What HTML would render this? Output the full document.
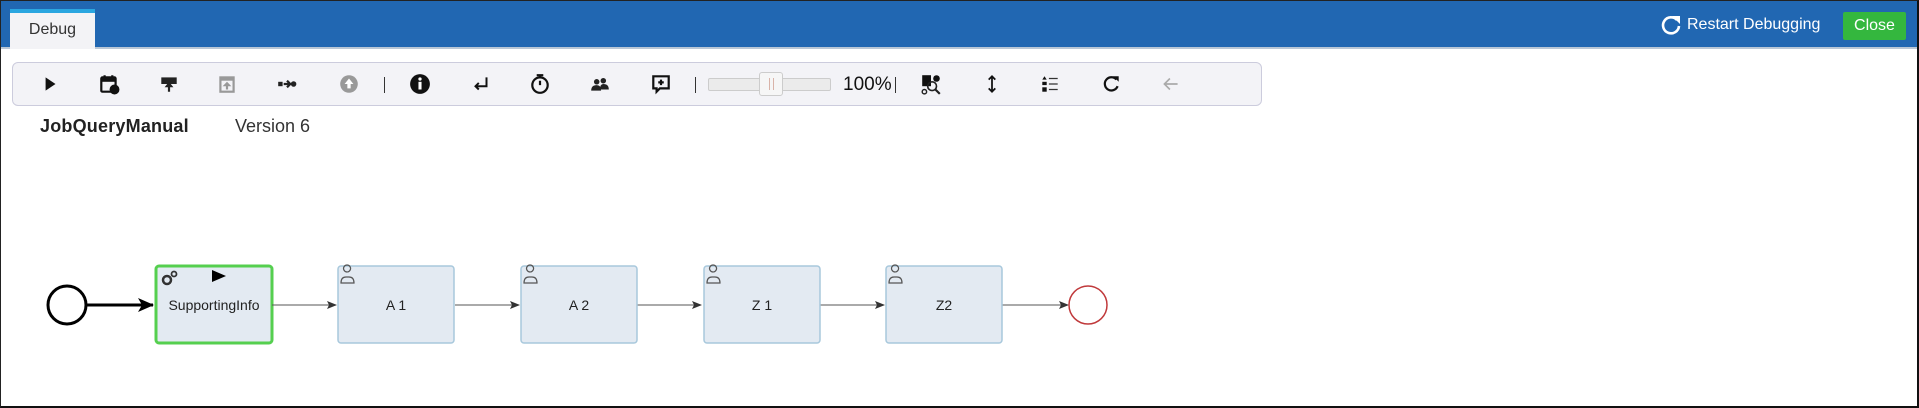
<!DOCTYPE html>
<html><head><meta charset="utf-8"><style>
*{box-sizing:border-box;margin:0;padding:0}
body{width:1919px;height:408px;overflow:hidden;background:#fff;font-family:"Liberation Sans",sans-serif;position:relative}
.frame{position:absolute;inset:0;border:1px solid #222;border-right:2px solid #111;border-bottom:2px solid #111;pointer-events:none;z-index:9}
.hdr{position:absolute;left:0;top:0;width:1919px;height:49px;background:#2167b2;border-bottom:2px solid #b9c7d6}
.tab{position:absolute;left:10px;top:9px;width:85px;height:40px;background:#f3f3f6;border-top:4px solid #2aa6e0;font-size:16px;color:#333;text-align:center;line-height:34px}
.restart{position:absolute;left:1660px;top:14px;color:#fff;font-size:16px;line-height:22px;display:flex;align-items:center;gap:5px}
.close{position:absolute;left:1843px;top:12px;width:63px;height:28px;background:#34b73e;border-radius:2px;color:#fff;font-size:16px;text-align:center;line-height:28px}
.tb{position:absolute;left:12px;top:62px;width:1250px;height:44px;background:#f3f3f7;border:1px solid #ccd;border-radius:6px}
.ic{position:absolute;top:10px;width:22px;height:22px;transform:translateX(-11px)}
.sep{position:absolute;top:14px;width:1px;height:16px;background:#333}
.title{position:absolute;left:40px;top:116px;font-size:18px;font-weight:bold;color:#222;letter-spacing:0.2px}
.ver{position:absolute;left:235px;top:116px;font-size:18px;color:#333}
</style></head><body>
<div class="hdr"></div>
<div class="tab">Debug</div>
<div class="restart"><svg width="22" height="22" viewBox="0 0 22 22"><path d="M17 6 A8 8 0 1 0 19 12" fill="none" stroke="#fff" stroke-width="2.6"/><path d="M12 2 L20 2 L20 10Z" fill="#fff"/></svg><span>Restart Debugging</span></div>
<div class="close">Close</div>
<div class="tb">
<svg class="ic" style="left:37px" viewBox="0 0 20 20"><path d="M6 4 L15 10 L6 16Z" fill="#111"/></svg>
<svg class="ic" style="left:96px" viewBox="0 0 20 20"><rect x="3" y="4" width="13" height="13" rx="1" fill="none" stroke="#111" stroke-width="2"/><rect x="3" y="4" width="13" height="4" fill="#111"/><path d="M6 2v3M13 2v3" stroke="#111" stroke-width="2"/><circle cx="15" cy="15" r="4.5" fill="#111"/></svg>
<svg class="ic" style="left:156px" viewBox="0 0 20 20"><rect x="3" y="4" width="14" height="6" fill="#222"/><path d="M10 8 L6 13 H9 V17 H11 V13 H14Z" fill="#222"/></svg>
<svg class="ic" style="left:214px" viewBox="0 0 20 20"><rect x="4" y="4" width="12" height="13" fill="none" stroke="#999" stroke-width="2"/><rect x="4" y="4" width="12" height="3" fill="#999"/><path d="M10 8 L6 12 H9 V15 H11 V12 H14Z" fill="#999"/></svg>
<svg class="ic" style="left:274px" viewBox="0 0 20 20"><rect x="2" y="8" width="4" height="4" fill="#222"/><path d="M7 10 H12 M10 7 L13 10 L10 13" stroke="#222" stroke-width="2" fill="none"/><circle cx="16" cy="10" r="2.5" fill="#222"/></svg>
<svg class="ic" style="left:336px" viewBox="0 0 20 20"><circle cx="10" cy="10" r="8" fill="#999"/><path d="M10 5 L6 10 H8.5 V14 H11.5 V10 H14Z" fill="#fff"/></svg>
<div class="sep" style="left:371px"></div>
<svg class="ic" style="left:407px" viewBox="0 0 20 20"><circle cx="10" cy="10" r="9" fill="#111"/><rect x="8.6" y="8" width="2.8" height="7" fill="#fff"/><circle cx="10" cy="5.5" r="1.5" fill="#fff"/></svg>
<svg class="ic" style="left:468px" viewBox="0 0 20 20"><path d="M15 4 V12 H5 M8 9 L5 12 L8 15" stroke="#111" stroke-width="1.8" fill="none"/></svg>
<svg class="ic" style="left:527px" viewBox="0 0 20 20"><circle cx="10" cy="11" r="7" fill="none" stroke="#111" stroke-width="2"/><path d="M7 2H13M10 2V4M10 7V11" stroke="#111" stroke-width="2"/></svg>
<svg class="ic" style="left:587px" viewBox="0 0 20 20"><circle cx="7" cy="8" r="2.5" fill="#222"/><circle cx="13" cy="7" r="2.5" fill="#222"/><path d="M2 16 Q2 11 7 11 Q11 11 11 16Z M10 15 Q10 10 13 10 Q18 10 18 15Z" fill="#222"/></svg>
<svg class="ic" style="left:648px" viewBox="0 0 20 20"><path d="M3 3 H17 V14 H9 L6 17 V14 H3Z" fill="none" stroke="#111" stroke-width="2"/><path d="M10 6 V11 M7.5 8.5 H12.5" stroke="#111" stroke-width="2"/></svg>
<div class="sep" style="left:682px"></div>
<div style="position:absolute;left:695px;top:15px;width:123px;height:13px;background:#ebebeb;border:1px solid #ccc;border-radius:2px"></div>
<div style="position:absolute;left:746px;top:9px;width:24px;height:24px;background:#f6f6f6;border:1px solid #ccc;border-radius:3px"><div style="position:absolute;left:9px;top:5px;width:1px;height:12px;background:#d9b3a8"></div><div style="position:absolute;left:13px;top:5px;width:1px;height:12px;background:#d9b3a8"></div></div>
<div style="position:absolute;left:830px;top:11px;font-size:19px;color:#111">100%</div>
<div class="sep" style="left:882px"></div>
<svg class="ic" style="left:918px" viewBox="0 0 20 20"><rect x="2" y="2" width="8" height="10" fill="#111"/><circle cx="15" cy="5" r="3" fill="#111"/><circle cx="11" cy="12" r="4" fill="none" stroke="#222" stroke-width="1.5"/><path d="M14 15 L18 19" stroke="#222" stroke-width="2"/><circle cx="4" cy="17" r="2" fill="none" stroke="#222" stroke-width="1.3"/></svg>
<svg class="ic" style="left:979px" viewBox="0 0 20 20"><path d="M10 3V17 M7 6L10 3L13 6 M7 14L10 17L13 14" stroke="#111" stroke-width="1.6" fill="none"/></svg>
<svg class="ic" style="left:1037px" viewBox="0 0 20 20"><path d="M5 3L7 6H3Z" fill="#111"/><rect x="3" y="8" width="4" height="3" fill="#111"/><rect x="3" y="13" width="4" height="4" fill="#111"/><path d="M9 5H17M9 10H17M9 15H17" stroke="#333" stroke-width="1.2"/></svg>
<svg class="ic" style="left:1098px" viewBox="0 0 20 20"><path d="M15 6 A6 6 0 1 0 16 12" fill="none" stroke="#111" stroke-width="2"/><path d="M12 3 L17 3 L17 8Z" fill="#111"/></svg>
<svg class="ic" style="left:1158px" viewBox="0 0 20 20"><path d="M16 10H4 M9 5L4 10L9 15" stroke="#aaa" stroke-width="1.5" fill="none"/></svg>
</div>
<div class="title">JobQueryManual</div>
<div class="ver">Version 6</div>
<svg style="position:absolute;left:0;top:0" width="1919" height="408">
<defs><marker id="a" markerWidth="10" markerHeight="8" refX="9" refY="4" orient="auto" markerUnits="userSpaceOnUse"><path d="M0 0L10 4L0 8L2 4Z" fill="#333"/></marker>
<marker id="b" markerWidth="16" markerHeight="14" refX="15" refY="7" orient="auto" markerUnits="userSpaceOnUse"><path d="M0 0L16 7L0 14L4 7Z" fill="#000"/></marker></defs>
<circle cx="67" cy="305" r="19" fill="#fff" stroke="#000" stroke-width="3"/>
<path d="M86 305H153" stroke="#000" stroke-width="3" marker-end="url(#b)"/>
<rect x="156" y="266" width="116" height="77" rx="3" fill="#e3eaf2" stroke="#55cf4f" stroke-width="3"/>
<g fill="#333"><circle cx="167" cy="280" r="4" fill="none" stroke="#333" stroke-width="2.5"/><circle cx="174" cy="274" r="2.5" fill="none" stroke="#333" stroke-width="1.8"/></g>
<path d="M212 270L226 276L212 282Z" fill="#000"/>
<text x="214" y="310" font-size="14" text-anchor="middle" fill="#222" font-family="Liberation Sans">SupportingInfo</text>
<path d="M272 305H336" stroke="#555" stroke-width="1" marker-end="url(#a)"/>
<path d="M455 305H519" stroke="#555" stroke-width="1" marker-end="url(#a)"/>
<path d="M637 305H701" stroke="#555" stroke-width="1" marker-end="url(#a)"/>
<path d="M820 305H884" stroke="#555" stroke-width="1" marker-end="url(#a)"/>
<path d="M1002 305H1068" stroke="#555" stroke-width="1" marker-end="url(#a)"/>
<g font-family="Liberation Sans" font-size="14" fill="#222" text-anchor="middle">
<rect x="338" y="266" width="116" height="77" rx="3" fill="#e3eaf2" stroke="#a8c8dc" stroke-width="1.5"/><text x="396" y="310">A 1</text>
<rect x="521" y="266" width="116" height="77" rx="3" fill="#e3eaf2" stroke="#a8c8dc" stroke-width="1.5"/><text x="579" y="310">A 2</text>
<rect x="704" y="266" width="116" height="77" rx="3" fill="#e3eaf2" stroke="#a8c8dc" stroke-width="1.5"/><text x="762" y="310">Z 1</text>
<rect x="886" y="266" width="116" height="77" rx="3" fill="#e3eaf2" stroke="#a8c8dc" stroke-width="1.5"/><text x="944" y="310">Z2</text>
</g>
<g fill="none" stroke="#555" stroke-width="1.2">
<path d="M347 272a3.5 3.5 0 1 1 0.1 0M341 283Q341 277 346 277H349Q354 277 354 283Z"/>
<path d="M530 272a3.5 3.5 0 1 1 0.1 0M524 283Q524 277 529 277H532Q537 277 537 283Z"/>
<path d="M713 272a3.5 3.5 0 1 1 0.1 0M707 283Q707 277 712 277H715Q720 277 720 283Z"/>
<path d="M895 272a3.5 3.5 0 1 1 0.1 0M889 283Q889 277 894 277H897Q902 277 902 283Z"/>
</g>
<circle cx="1088" cy="305" r="19" fill="#fff" stroke="#c0393b" stroke-width="1.5"/>
</svg>
<div class="frame"></div>
</body></html>
